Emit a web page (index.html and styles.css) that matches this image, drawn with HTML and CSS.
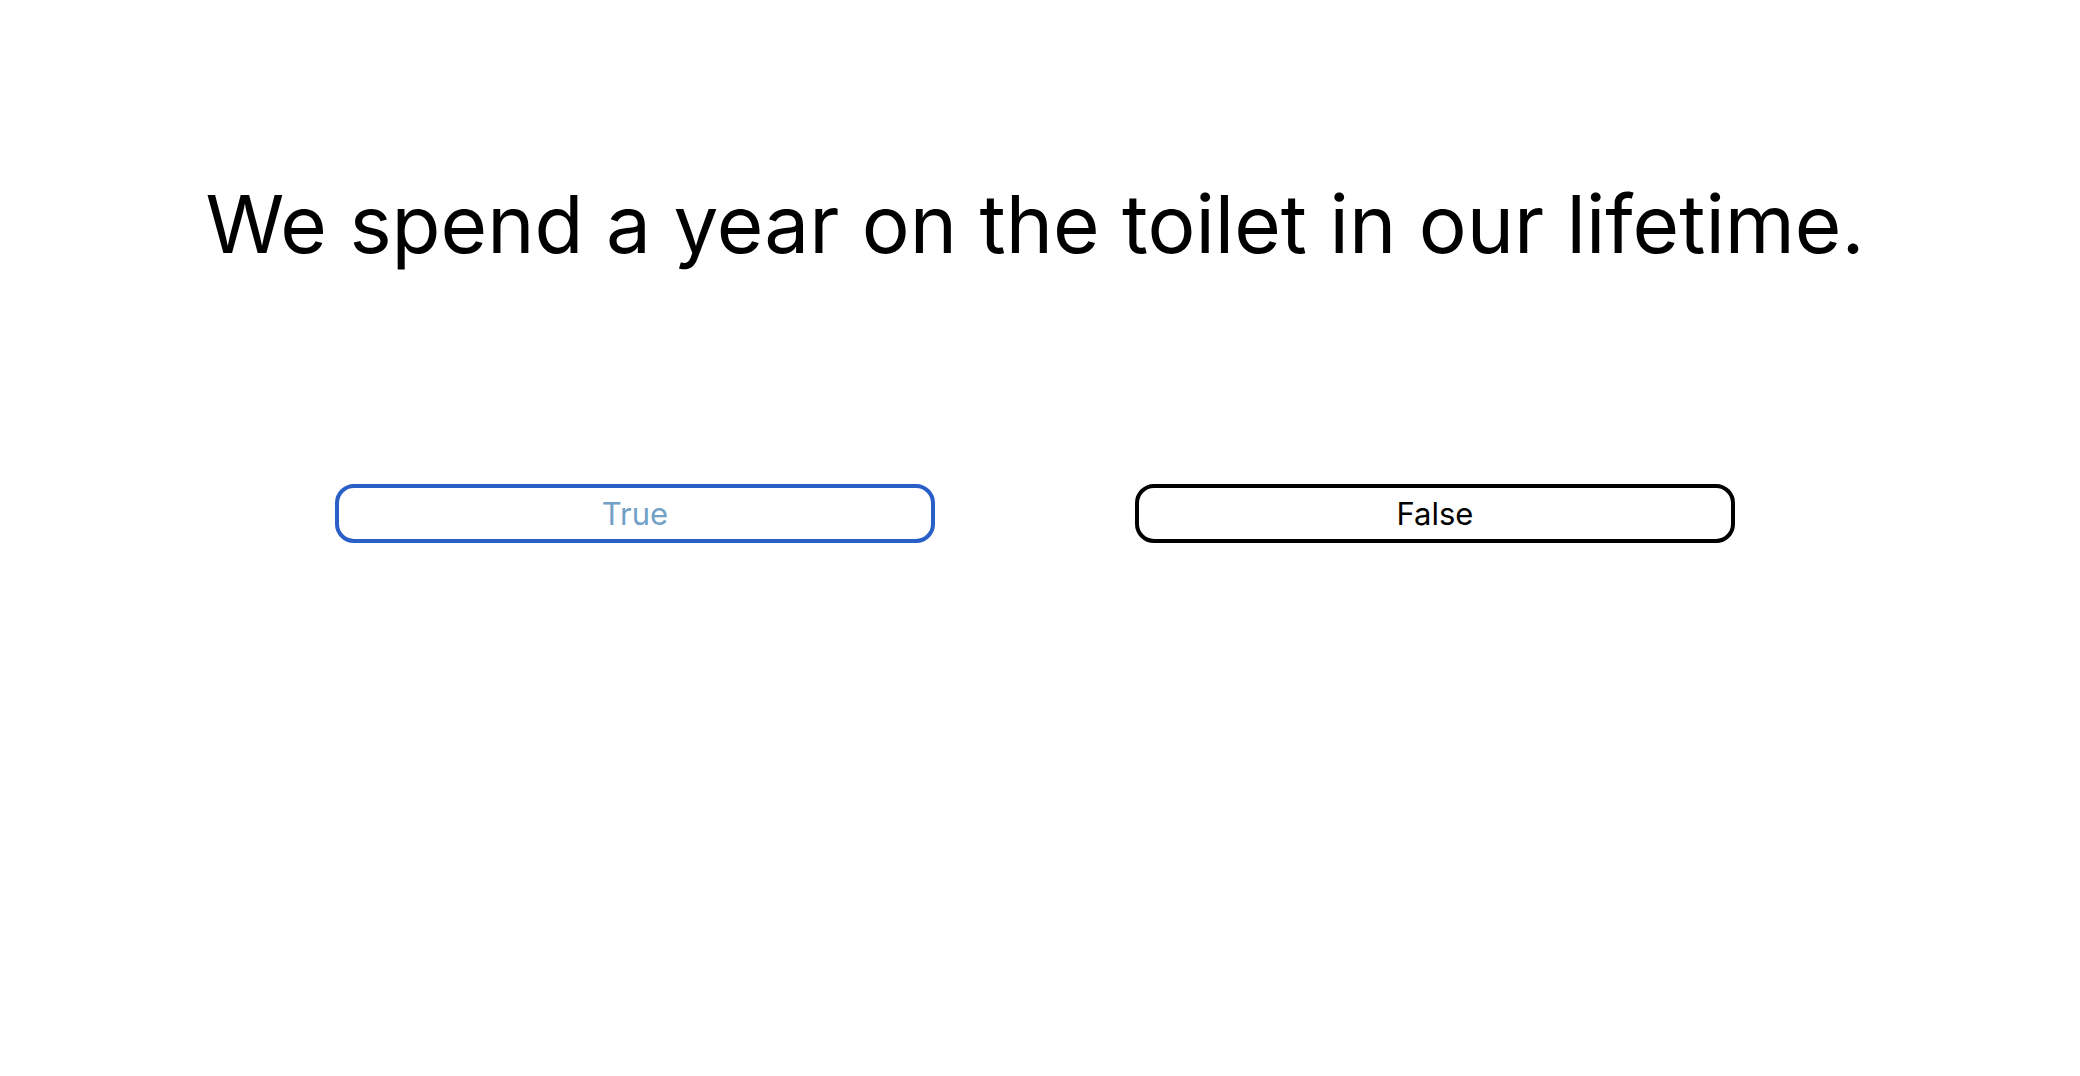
FILE: index.html
```html
<!DOCTYPE html>
<html lang="en">
<head>
<meta charset="utf-8">
<title>Quiz</title>
<link rel="stylesheet" href="styles.css">
</head>
<body>
<main class="quiz">
  <h1 class="question">We spend a year on the toilet in our lifetime.</h1>
  <div class="answers">
    <button class="answer answer-true">True</button>
    <button class="answer answer-false">False</button>
  </div>
</main>
</body>
</html>
```

FILE: styles.css
```css
html, body {
  margin: 0;
  padding: 0;
  background: #fff;
}

body {
  font-family: Inter, "Noto Sans", sans-serif;
  color: #000;
}

.quiz {
  width: 2070px;
  display: flex;
  flex-direction: column;
  align-items: center;
}

.question {
  margin: 164px 0 0;
  font-size: 80px;
  font-weight: 400;
  line-height: 120px;
  letter-spacing: 0;
}

.answers {
  margin-top: 200px;
  display: flex;
  gap: 200px;
}

.answer {
  width: 600px;
  height: 59px;
  box-sizing: border-box;
  background: #fff;
  border: 4px solid #000;
  border-radius: 19px;
  font-family: Inter, "Noto Sans", sans-serif;
  font-size: 31px;
  line-height: 1;
  padding: 0;
  color: #000;
}

.answer-true {
  border-color: #2a5fc8;
  color: #72a1c7;
}
```
